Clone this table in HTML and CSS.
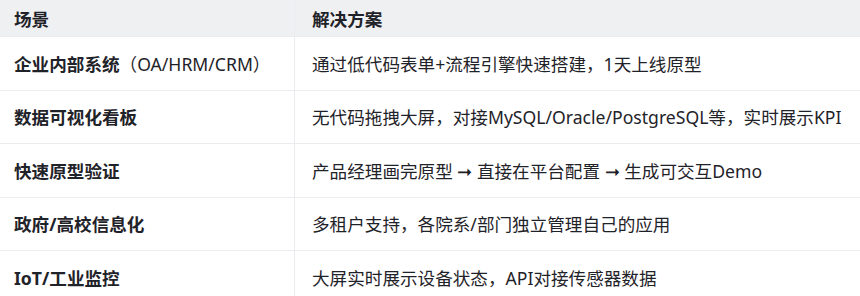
FILE: index.html
```html
<!DOCTYPE html>
<html lang="zh-CN">
<head>
<meta charset="utf-8">
<link rel="stylesheet" href="styles.css">
</head>
<body>
<table class="grid">
  <thead>
    <tr><th class="c1">场景</th><th>解决方案</th></tr>
  </thead>
  <tbody>
    <tr><td class="c1"><strong>企业内部系统</strong>（OA/HRM/CRM）</td><td>通过低代码表单+流程引擎快速搭建，1天上线原型</td></tr>
    <tr><td class="c1"><strong>数据可视化看板</strong></td><td>无代码拖拽大屏，对接MySQL/Oracle/PostgreSQL等，实时展示KPI</td></tr>
    <tr><td class="c1"><strong>快速原型验证</strong></td><td>产品经理画完原型 ➞ 直接在平台配置 ➞ 生成可交互Demo</td></tr>
    <tr><td class="c1"><strong>政府/高校信息化</strong></td><td>多租户支持，各院系/部门独立管理自己的应用</td></tr>
    <tr><td class="c1"><strong>IoT/工业监控</strong></td><td>大屏实时展示设备状态，API对接传感器数据</td></tr>
  </tbody>
</table>
</body>
</html>
```
FILE: styles.css
```css
html, body {
  margin: 0;
  padding: 0;
  background: #ffffff;
}
body {
  font-family: "Noto Sans", "Noto Sans CJK SC", sans-serif;
  font-size: 17.6px;
  color: #1f2329;
}
.grid {
  width: 100%;
  border-collapse: collapse;
}
.grid th, .grid td {
  text-align: left;
  padding: 0 14px 0 17px;
  border-bottom: 1px solid #ebecef;
  border-left: 1px solid #ebecef;
  white-space: nowrap;
}
.grid th.c1, .grid td.c1 {
  border-left: none;
  width: 266px;
  padding-left: 14px;
}
.grid th {
  height: 36px;
  background: #eff0f2;
  font-weight: 700;
  vertical-align: middle;
}
.grid td {
  height: 52.5px;
}
.grid strong {
  font-weight: 700;
}
```
